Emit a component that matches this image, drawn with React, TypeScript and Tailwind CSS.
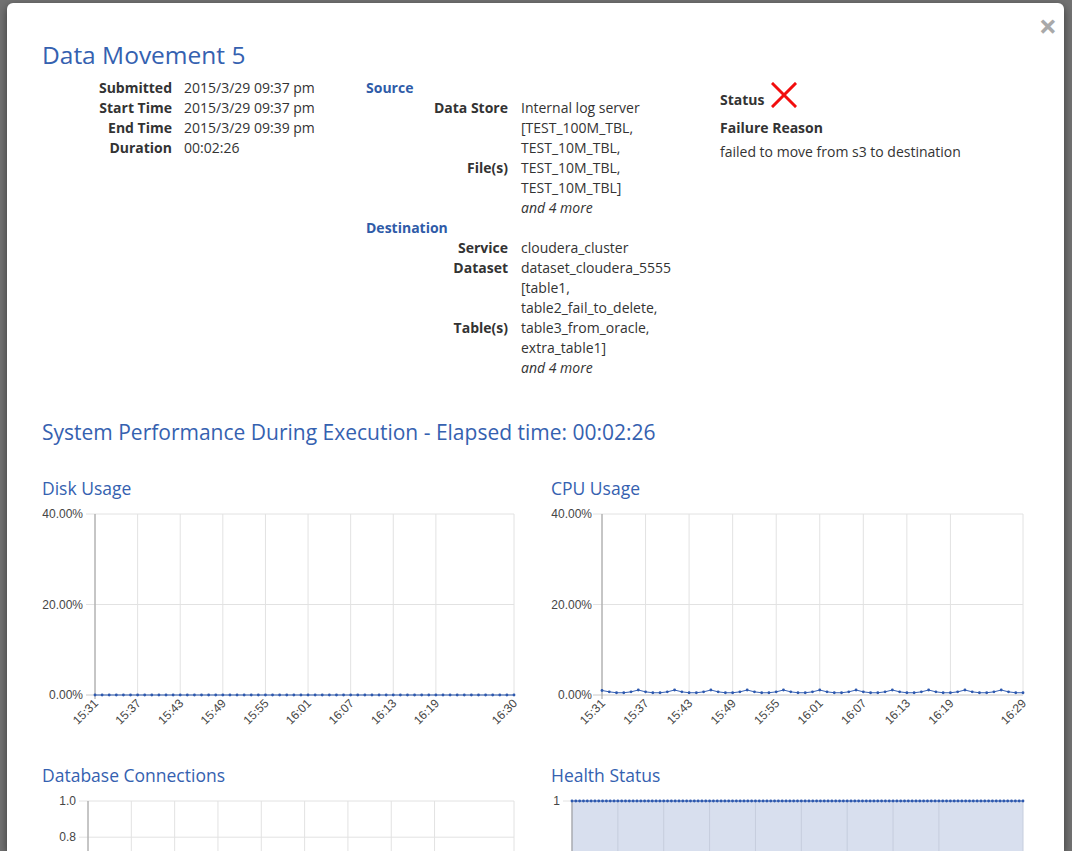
import React from "react"

//////////////////////////////////////////////////////
// CHART
//////////////////////////////////////////////////////

type Tick = { label: string; v: number }

type ChartProps = {
  axisX: number
  right?: number
  yTicks: Tick[]
  yMax: number
  xTicks: Tick[]
  tMax: number
  points?: number[]
  step?: number
  fill?: boolean
  labelGap?: number
}

const TOP = 13
const PLOT_H = 181

function Chart({ axisX, right = 472, yTicks, yMax, xTicks, tMax, points = [], step = 1, fill = false, labelGap = 12 }: ChartProps) {
  const bottom = TOP + PLOT_H
  const xOf = (t: number) => axisX + (t / tMax) * (right - axisX)
  const yOf = (v: number) => bottom - (v / yMax) * PLOT_H

  const pts = points.map((v, i) => [xOf(i * step), yOf(v)])
  const line = pts.map((p) => p.join(",")).join(" ")

  return (
    <svg width={480} height={262} className="block" style={{ fontFamily: "'Liberation Sans', Arial, sans-serif" }}>
      {fill && pts.length > 0 && (
        <polygon
          points={`${axisX},${bottom} ${line} ${right},${bottom}`}
          fill="#d8dfee"
        />
      )}

      {/* horizontal grid */}
      {yTicks.map((t) => (
        <g key={t.label}>
          <line x1={axisX - 9} x2={right} y1={yOf(t.v)} y2={yOf(t.v)} stroke={t.v === 0 ? "#c8c8c8" : "#e2e2e2"} />
          <text x={axisX - labelGap} y={yOf(t.v)} dy="4" textAnchor="end" fontSize="12" fill="#454545">
            {t.label}
          </text>
        </g>
      ))}

      {/* vertical grid */}
      {xTicks.map((t) => (
        <g key={t.label}>
          <line x1={xOf(t.v)} x2={xOf(t.v)} y1={TOP} y2={bottom} stroke={fill ? "#c6cddd" : "#e2e2e2"} />
          <text
            transform={`translate(${xOf(t.v) + 4},${bottom + 9}) rotate(-45)`}
            textAnchor="end"
            fontSize="12"
            fill="#454545"
          >
            {t.label}
          </text>
        </g>
      ))}

      <line x1={axisX} x2={axisX} y1={TOP} y2={bottom + 4} stroke="#9a9a9a" />

      {pts.length > 0 && (
        <>
          <polyline points={line} fill="none" stroke="#3560b4" strokeWidth="1" />
          {pts.map((p, i) => (
            <circle key={i} cx={p[0]} cy={p[1]} r="1.4" fill="#2d58ae" />
          ))}
        </>
      )}
    </svg>
  )
}

//////////////////////////////////////////////////////
// DATA
//////////////////////////////////////////////////////

const pctTicks = [
  { label: "40.00%", v: 40 },
  { label: "20.00%", v: 20 },
  { label: "0.00%", v: 0 },
]

const diskX = ["15:31", "15:37", "15:43", "15:49", "15:55", "16:01", "16:07", "16:13", "16:19"]
  .map((l, i) => ({ label: l, v: i * 6 }))
  .concat([{ label: "16:30", v: 59 }])

const cpuX = ["15:31", "15:37", "15:43", "15:49", "15:55", "16:01", "16:07", "16:13", "16:19"]
  .map((l, i) => ({ label: l, v: i * 6 }))
  .concat([{ label: "16:29", v: 58 }])

const diskData = Array.from({ length: 60 }, () => 0)
const cpuData = Array.from({ length: 59 }, (_, i) =>
  i === 0 ? 1 : (i % 5 === 0 ? 1.1 : i % 5 === 4 || i % 5 === 1 ? 0.7 : 0.5)
)

const dbTicks = [
  { label: "1.0", v: 1 },
  { label: "0.8", v: 0.8 },
  { label: "0.6", v: 0.6 },
  { label: "0.4", v: 0.4 },
  { label: "0.2", v: 0.2 },
  { label: "0.0", v: 0 },
]

const healthData = Array.from({ length: 119 }, () => 1)

//////////////////////////////////////////////////////
// UI
//////////////////////////////////////////////////////

function Row({ label, children }: { label: string; children: React.ReactNode }) {
  return (
    <>
      <div className="font-bold text-right self-center">{label}</div>
      <div>{children}</div>
    </>
  )
}

export default function App() {
  return (
    <div
      className="w-[1072px] h-[851px] overflow-hidden bg-[#727272] pt-[3px] pl-[7px] pr-[8px]"
      style={{ fontFamily: "'Open Sans', 'Noto Sans', sans-serif" }}
    >
      <div className="relative h-[848px] overflow-hidden bg-white rounded-t-md shadow-[0_3px_9px_rgba(0,0,0,0.5)] pl-[35px] pt-[35px] text-[14px] leading-[20px] text-[#333]">
        {/* CLOSE */}
        <div className="absolute right-[7px] top-[8px] text-[32px] leading-[30px] font-bold text-[#a9a9a9]">×</div>

        <h1 className="text-[24.5px] leading-[34px] text-[#3561b0]">Data Movement 5</h1>

        {/* DETAILS */}
        <div className="flex mt-[6px]">
          <div className="w-[324px] grid grid-cols-[130px_1fr] gap-x-3 content-start">
            <Row label="Submitted">2015/3/29 09:37 pm</Row>
            <Row label="Start Time">2015/3/29 09:37 pm</Row>
            <Row label="End Time">2015/3/29 09:39 pm</Row>
            <Row label="Duration">00:02:26</Row>
          </div>

          <div className="w-[354px]">
            <div className="font-bold text-[#2f5ba8]">Source</div>
            <div className="grid grid-cols-[142px_1fr] gap-x-[13px]">
              <Row label="Data Store">Internal log server</Row>
              <Row label="File(s)">
                <div>[TEST_100M_TBL,</div>
                <div>TEST_10M_TBL,</div>
                <div>TEST_10M_TBL,</div>
                <div>TEST_10M_TBL]</div>
                <div className="italic">and 4 more</div>
              </Row>
            </div>
            <div className="font-bold text-[#2f5ba8]">Destination</div>
            <div className="grid grid-cols-[142px_1fr] gap-x-[13px]">
              <Row label="Service">cloudera_cluster</Row>
              <Row label="Dataset">dataset_cloudera_5555</Row>
              <Row label="Table(s)">
                <div>[table1,</div>
                <div>table2_fail_to_delete,</div>
                <div>table3_from_oracle,</div>
                <div>extra_table1]</div>
                <div className="italic">and 4 more</div>
              </Row>
            </div>
          </div>

          <div className="pt-1">
            <div className="flex items-end gap-[7px]">
              <span className="font-bold">Status</span>
              <svg width="26" height="26" viewBox="0 0 26 26" className="mb-[2px]">
                <path d="M2 2 L24 24 M24 2 L2 24" stroke="#f20d0d" strokeWidth="3" strokeLinecap="square" />
              </svg>
            </div>
            <div className="font-bold mt-2">Failure Reason</div>
            <div className="mt-1">failed to move from s3 to destination</div>
          </div>
        </div>

        {/* PERFORMANCE */}
        <h2 className="mt-[39px] text-[21px] leading-[30px] text-[#3561b0]">
          System Performance During Execution - Elapsed time: 00:02:26
        </h2>

        <div className="mt-[29px] grid grid-cols-[509px_480px]">
          <div>
            <h3 className="text-[17.5px] leading-[25px] text-[#3561b0]">Disk Usage</h3>
            <Chart axisX={53} yTicks={pctTicks} yMax={40} xTicks={diskX} tMax={59} points={diskData} />
          </div>
          <div>
            <h3 className="text-[17.5px] leading-[25px] text-[#3561b0]">CPU Usage</h3>
            <Chart axisX={51} labelGap={10} yTicks={pctTicks} yMax={40} xTicks={cpuX} tMax={58} points={cpuData} />
          </div>
          <div>
            <h3 className="text-[17.5px] leading-[25px] text-[#3561b0]">Database Connections</h3>
            <Chart axisX={46} yTicks={dbTicks} yMax={1} xTicks={diskX} tMax={59} />
          </div>
          <div>
            <h3 className="text-[17.5px] leading-[25px] text-[#3561b0]">Health Status</h3>
            <Chart
              axisX={21}
              labelGap={12}
              yTicks={[{ label: "1", v: 1 }, { label: "0", v: 0 }]}
              yMax={1}
              xTicks={diskX}
              tMax={59}
              points={healthData}
              step={0.5}
              fill
            />
          </div>
        </div>
      </div>
    </div>
  )
}
